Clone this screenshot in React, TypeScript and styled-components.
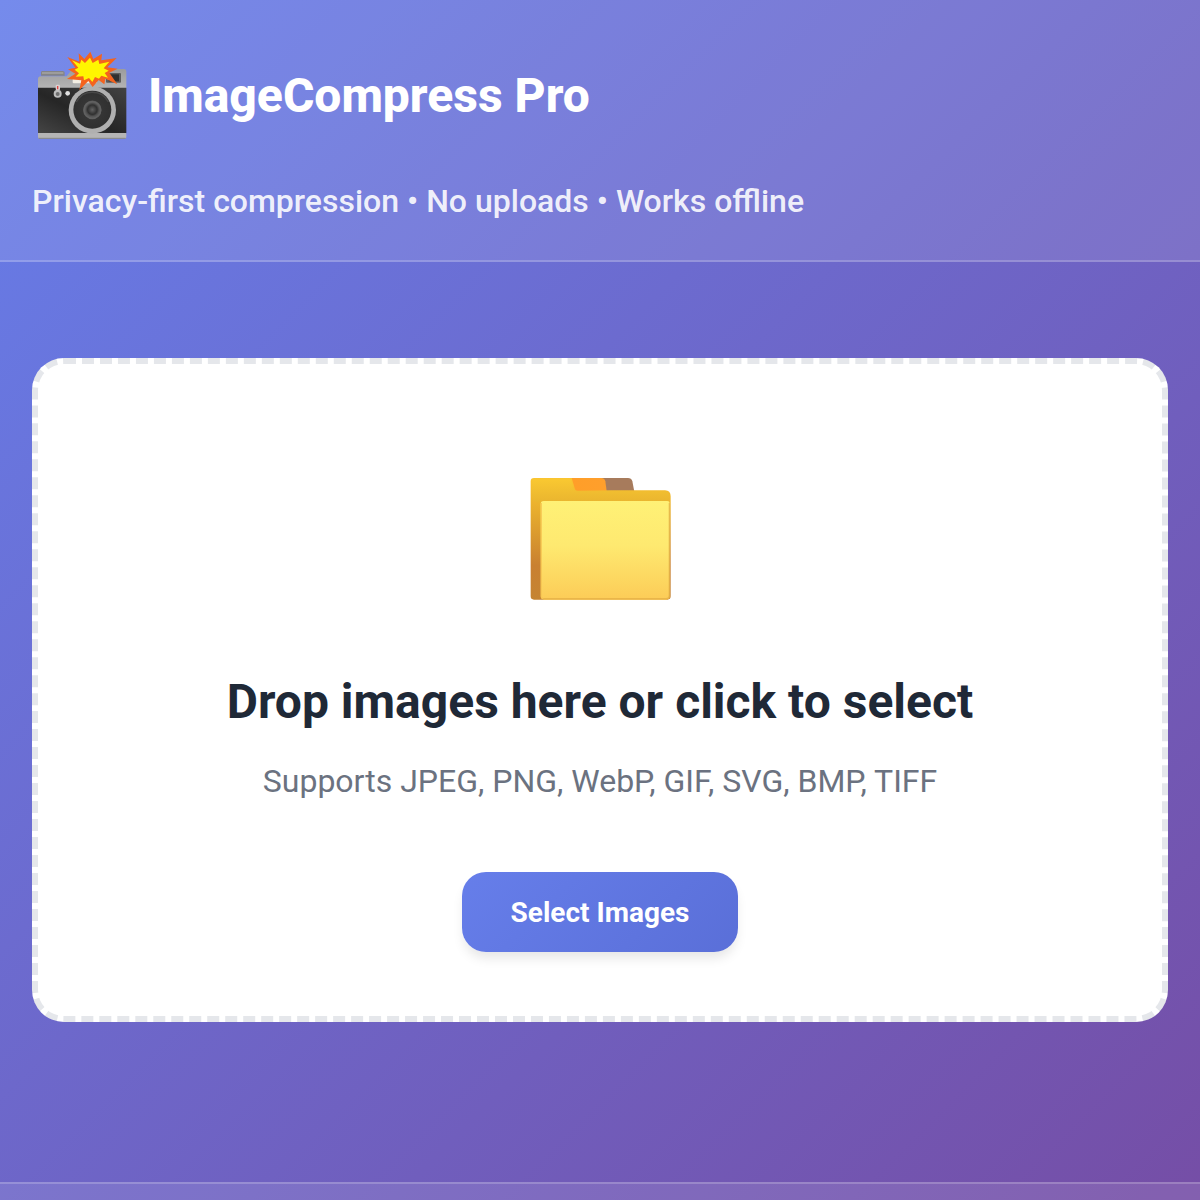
import React, { useRef } from "react";
import styled, { createGlobalStyle } from "styled-components";

const GlobalStyle = createGlobalStyle`
  *, *::before, *::after { box-sizing: border-box; margin: 0; padding: 0; }
  body {
    font-family: Roboto, "Liberation Sans", sans-serif;
    color: #1f2937;
    -webkit-font-smoothing: antialiased;
  }
`;

const Page = styled.div`
  min-height: 100vh;
  display: flex;
  flex-direction: column;
  background: linear-gradient(135deg, #667eea 0%, #764ba2 106%);
`;

const Header = styled.header`
  padding: 32px 32px 34px;
  background: rgba(255, 255, 255, 0.1);
  border-bottom: 2px solid rgba(255, 255, 255, 0.2);
`;

const Brand = styled.div`
  display: flex;
  align-items: center;
  gap: 16px;
  min-height: 128px;
  margin-bottom: 16px;
`;

const BrandIcon = styled.svg`
  width: 100px;
  height: 100px;
  flex: none;
`;

const Title = styled.h1`
  font-size: 48px;
  line-height: 76px;
  font-weight: 800;
  color: #fff;
`;

const Tagline = styled.p`
  font-size: 32px;
  line-height: 50px;
  font-weight: 500;
  color: rgba(255, 255, 255, 0.9);
`;

const Main = styled.main`
  flex: 1;
  padding: 96px 32px;
`;

const DropZone = styled.section`
  display: flex;
  flex-direction: column;
  align-items: center;
  padding: 64px;
  text-align: center;
  background: #fff;
  border: 6px dashed #e5e7eb;
  border-radius: 32px;
`;

const FolderIcon = styled.svg`
  width: 160px;
  height: 204px;
  margin-bottom: 32px;
`;

const DropTitle = styled.h2`
  font-size: 48px;
  line-height: 76px;
  font-weight: 700;
  margin-bottom: 16px;
`;

const Formats = styled.p`
  font-size: 32px;
  line-height: 50px;
  color: #6b7280;
  margin-bottom: 66px;
`;

const SelectButton = styled.button`
  height: 80px;
  min-width: 276px;
  padding: 2px 48px 0;
  border: 0;
  border-radius: 24px;
  font: 700 28px/44px Roboto, "Liberation Sans", sans-serif;
  color: #fff;
  background: linear-gradient(135deg, #667eea, #5a6fd8);
  box-shadow: 0 8px 12px -2px rgba(0, 0, 0, 0.1);
  cursor: pointer;
`;

const Footer = styled.footer`
  padding-top: 16px;
  background: rgba(255, 255, 255, 0.1);
  border-top: 2px solid rgba(255, 255, 255, 0.2);
`;

function Camera() {
  return (
    <BrandIcon viewBox="6 3 300 300" aria-hidden="true">
      <defs>
        <linearGradient id="camBody" x1="0" y1="1" x2="1" y2="0">
          <stop offset="0" stopColor="#454545" />
          <stop offset="0.45" stopColor="#262626" />
          <stop offset="1" stopColor="#424242" />
        </linearGradient>
        <linearGradient id="camTop" x1="0" y1="0" x2="0" y2="1">
          <stop offset="0" stopColor="#9c9c9c" />
          <stop offset="1" stopColor="#b4b4b4" />
        </linearGradient>
        <radialGradient id="camLens">
          <stop offset="0" stopColor="#626262" />
          <stop offset="0.25" stopColor="#303030" />
          <stop offset="0.36" stopColor="#555" />
          <stop offset="0.44" stopColor="#555" />
          <stop offset="0.5" stopColor="#353535" />
          <stop offset="1" stopColor="#303030" />
        </radialGradient>
      </defs>
      <path d="M33 92V82q0-4 5-4h60q6 0 6 5v9z" fill="#858585" />
      <path d="M36 84h64" stroke="#a9a9a9" strokeWidth="4" />
      <path d="M24 103q0-9 8-9h78l12-16q5-6 12-6h148q7 0 7 7v50H24z" fill="url(#camTop)" />
      <path d="M24 128h265v137H24z" fill="url(#camBody)" />
      <path d="M24 264h265v12q0 5-5 5H29q-5 0-5-5z" fill="#b5b5b5" />
      <path d="M26 280h261" stroke="#858585" strokeWidth="3" />
      <rect x="228" y="84" width="45" height="29" rx="3" fill="#5c5c5c" />
      <rect x="236" y="88" width="31" height="21" fill="#303030" />
      <rect x="128" y="91" width="72" height="24" rx="3" fill="#f4eee3" />
      <circle cx="187" cy="195" r="71" fill="#b0b0b0" />
      <circle cx="187" cy="194" r="57" fill="url(#camLens)" />
      <path d="M139 171a54 54 0 0 1 96 0" fill="none" stroke="#484848" strokeWidth="4" />
      <circle cx="187" cy="195" r="25" fill="none" stroke="#606060" strokeWidth="5" />
      <circle cx="83" cy="146" r="12" fill="#bdbdbd" />
      <circle cx="83" cy="147" r="6" fill="#6f6f6f" />
      <rect x="77" y="119" width="13" height="17" rx="4" fill="#d8d0d0" />
      <path d="M83 123v10" stroke="#df4545" strokeWidth="4" />
      <circle cx="113" cy="145" r="7" fill="#dfdfdf" />
      <path
        d="M112 36L148 50L146 25L163 42L181 20L190 42L216 26L214 46L260 39L232 67L263 71L238 83L262 118L226 101L223 118L206 105L188 126L175 108L148 135L154 106L111 102L136 86L114 73L136 68Z"
        fill="#f4631e"
      />
      <path
        d="M126 46L150 56L154 44L165 54L180 38L188 54L205 44L208 57L238 50L221 70L236 77L224 84L234 98L214 92L207 101L195 96L187 111L177 99L162 106L160 94L137 95L147 85L134 74L145 68Z"
        fill="#fff600"
      />
    </BrandIcon>
  );
}

function Folder() {
  return (
    <FolderIcon viewBox="0 -111 480 612" aria-hidden="true">
      <defs>
        <linearGradient id="folderBack" x1="0" y1="0" x2="0" y2="1">
          <stop offset="0" stopColor="#fbc52f" />
          <stop offset="0.3" stopColor="#e5aa2d" />
          <stop offset="0.72" stopColor="#c98031" />
          <stop offset="1" stopColor="#c58433" />
        </linearGradient>
        <linearGradient id="folderFront" x1="0" y1="0" x2="0" y2="1">
          <stop offset="0" stopColor="#fff176" />
          <stop offset="0.45" stopColor="#fee970" />
          <stop offset="1" stopColor="#fccc57" />
        </linearGradient>
        <linearGradient id="folderTab" x1="0" y1="0" x2="1" y2="0">
          <stop offset="0" stopColor="#ff9e28" />
          <stop offset="1" stopColor="#ff9f2c" />
        </linearGradient>
        <linearGradient id="folderTop" x1="0" y1="0" x2="0" y2="1">
          <stop offset="0" stopColor="#f9c831" />
          <stop offset="1" stopColor="#e9b42f" />
        </linearGradient>
      </defs>
      <path d="M225 39h99q10 0 13 10l6 31H225z" fill="#a77b5c" />
      <path d="M140 39h104q9 0 12 10l4 30H150z" fill="url(#folderTab)" />
      <path d="M32 49q0-10 10-10h113l10 34q2 4 8 4l100-1h162q17 0 17 18v300q0 10-10 10H42q-10 0-10-10z" fill="url(#folderBack)" />
      <path d="M36 50q0-7 8-7h108l9 30q2 6 9 6h265q12 0 13 15v20H64q-28 0-28-22z" fill="url(#folderTop)" />
      <path d="M62 117q0-9 9-9h371q7 0 7 7v279q0 10-10 10H72q-10 0-10-10z" fill="url(#folderFront)" />
      <path d="M448 114v278q0 9-9 9H68" fill="none" stroke="#dda73f" strokeWidth="4" strokeOpacity="0.6" />
      <path d="M64 114v280q0 5 6 7" fill="none" stroke="#f7c652" strokeWidth="3" />
    </FolderIcon>
  );
}

export default function App() {
  const picker = useRef<HTMLInputElement>(null);
  return (
    <>
      <GlobalStyle />
      <Page>
        <Header>
          <Brand>
            <Camera />
            <Title>ImageCompress Pro</Title>
          </Brand>
          <Tagline>Privacy-first compression • No uploads • Works offline</Tagline>
        </Header>
        <Main>
          <DropZone>
            <Folder />
            <DropTitle>Drop images here or click to select</DropTitle>
            <Formats>Supports JPEG, PNG, WebP, GIF, SVG, BMP, TIFF</Formats>
            <SelectButton type="button" onClick={() => picker.current?.click()}>
              Select Images
            </SelectButton>
            <input ref={picker} type="file" accept="image/*" multiple hidden aria-label="Select Images" />
          </DropZone>
        </Main>
        <Footer />
      </Page>
    </>
  );
}
